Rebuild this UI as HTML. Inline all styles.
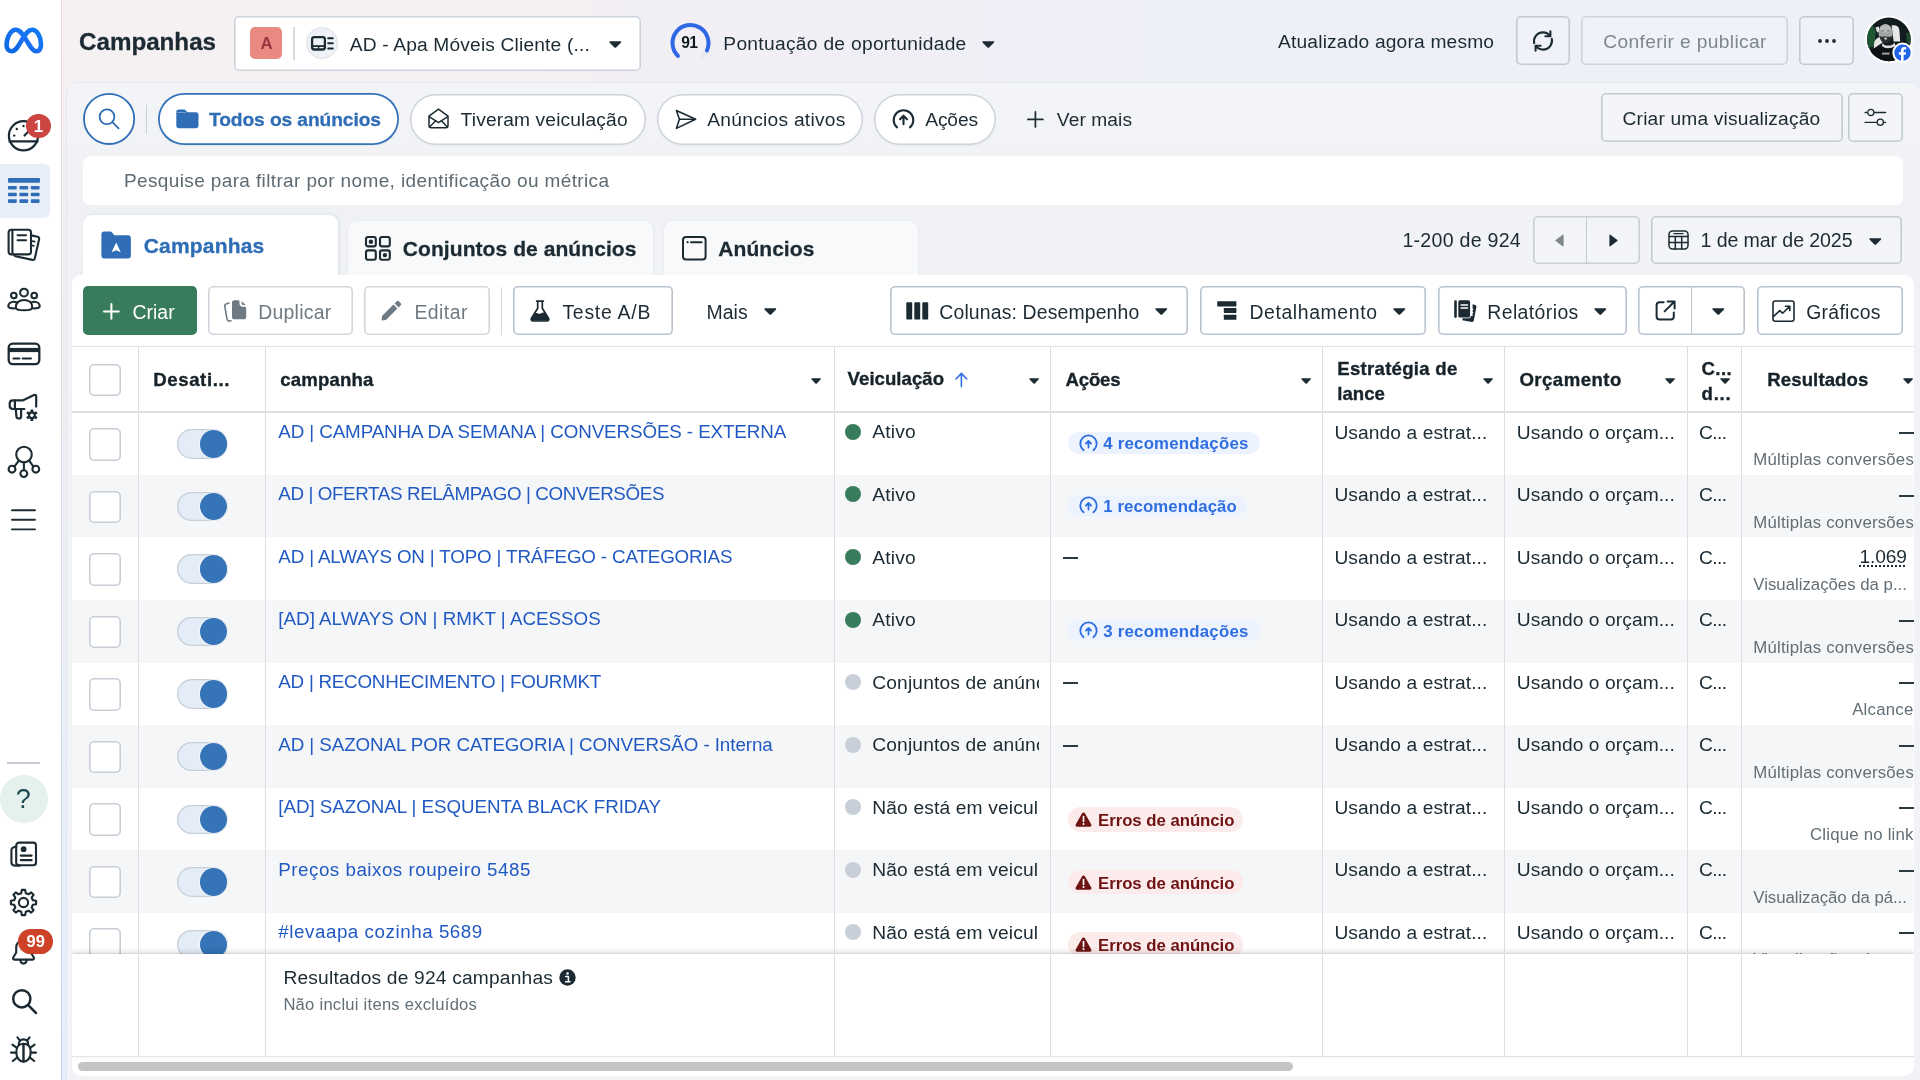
<!DOCTYPE html>
<html lang="pt-BR">
<head>
<meta charset="utf-8">
<title>Gerenciador de Anúncios - Campanhas</title>
<style>
*{box-sizing:border-box;margin:0;padding:0}
html,body{width:1920px;height:1080px;overflow:hidden}
body{font-family:"Liberation Sans",Arial,sans-serif;color:#1c2b33;position:relative;
 background:linear-gradient(90deg,#f6f1f2 0%,#f4f0f3 25%,#f0eff6 48%,#eef0f8 65%,#edf0f8 100%);}
#app{position:absolute;left:0;top:0;width:1920px;height:1080px;overflow:hidden;will-change:transform}
.abs{position:absolute}
.t{position:absolute;white-space:pre;line-height:1}
.hb{-webkit-text-stroke:.35px #17232a;color:#17232a}
.sb{-webkit-text-stroke:.3px}
svg{position:absolute;overflow:visible}
#leftstrip{position:absolute;left:61px;top:0;width:7px;height:1080px;background:linear-gradient(180deg,#f6f0f1 0%,#f1eef3 35%,#eeeff6 52%,#e6eefa 80%,#e3eefb 100%)}
#sidebar{position:absolute;left:0;top:0;width:61.2px;height:1080px;background:#fff}
#sbline{position:absolute;left:61.2px;top:0;width:1.3px;height:1080px;background:linear-gradient(180deg,#e6d9dc 0%,#dedbe2 40%,#d9dde6 55%,#c9d6e8 100%)}
#panel{position:absolute;left:66.2px;top:81.6px;width:1854.5px;height:1010px;background:linear-gradient(180deg,#f3f4f8 0,#f2f3f7 60px,#eff1f5 125px,#f2f3f7 165px,#f0f2f6 195px,#f1f3f7 100%);border:1px solid #e4e8ee;border-radius:10px 10px 0 0}
.btn{position:absolute;--bc:#c5ced6;--bw:1.6px;box-shadow:inset 0 0 0 var(--bw) var(--bc);border-radius:5px;background:#fff}
.btn.dis{--bc:#d0d7dd}
.pill{position:absolute;top:93.5px;height:51px;border-radius:26px;--bc:#cdd3d9;--bw:1.5px;background:#fff;box-shadow:inset 0 0 0 var(--bw) var(--bc),0 1px 2px rgba(0,0,0,.05)}
.pill.on{--bc:#3573b9;--bw:1.8px;top:93px;height:51.8px}
.vline{position:absolute;width:1.35px;background:#dcdee1}
.hline{position:absolute;height:1.5px;background:#dcdfe3}
.rowbg{position:absolute;left:72px;width:1841px;height:62.5px;background:#f5f6f7}
.cb{position:absolute;left:88.5px;width:32.5px;height:32.5px;box-shadow:inset 0 0 0 1.6px #c7ced6;border-radius:5px;background:#fff}
.tg{position:absolute;left:176.5px;width:51px;height:29.5px;border-radius:15px;background:#e4ecf7;box-shadow:inset 0 0 0 1.3px #c7cfd8}
.tg i{position:absolute;right:0.6px;top:1px;width:27.5px;height:27.5px;border-radius:50%;background:#3674b8;box-shadow:0 0 0 1px rgba(255,255,255,.6)}
.dot{position:absolute;left:844.5px;width:16px;height:16px;border-radius:50%}
.dot.g{background:#387c5c}
.dot.x{background:#c9cfd8}
.chip{position:absolute;height:21.5px;border-radius:11px}
.chip.b{background:#edf3fe}
.chip.r{background:#fcebeb}
.caret{position:absolute;width:0;height:0;border-left:5.5px solid transparent;border-right:5.5px solid transparent;border-top:6.5px solid #1c2b33;border-radius:2px}
.clip{position:absolute;overflow:hidden}
</style>
</head>
<body>
<div id="app">
<div id="leftstrip"></div>
<div id="sbline"></div>
<div id="panel"></div>
<div id="sidebar">
<svg style="left:3.5px;top:27px" width="39.5" height="27" viewBox="0 0 39.5 27"><defs><linearGradient id="mg" x1="0" y1="1" x2="1" y2="0"><stop offset="0" stop-color="#0668e1"/><stop offset=".5" stop-color="#1b6ff0"/><stop offset="1" stop-color="#0a7cf5"/></linearGradient></defs>
<path d="M2.6 18.2 C2.6 10 7 2.7 11.6 2.7 C16.5 2.7 19.5 8.5 23 14.2 C26.3 19.6 28.6 24.2 32.2 24.2 C35.4 24.2 37 21.3 37 17.2 C37 9.6 33 2.7 28.2 2.7 C24.4 2.7 21.7 6.7 18.6 11.8 C14.8 18.1 12.2 24.2 7.7 24.2 C4.4 24.2 2.6 21.8 2.6 18.2 Z" fill="none" stroke="url(#mg)" stroke-width="4.6" stroke-linejoin="round"/></svg>
<svg style="left:7px;top:119px" width="34" height="34" viewBox="0 0 34 34" fill="none" stroke="#1c2b33" stroke-width="2.2" stroke-linecap="round"><circle cx="16.5" cy="16.8" r="14.6"/><path d="M2.5 22.4H30.5"/><path d="M17.5 16.5L23 11"/><circle cx="7.2" cy="16.6" r="1.2" fill="#1c2b33" stroke="none"/><circle cx="9.8" cy="10" r="1.2" fill="#1c2b33" stroke="none"/><circle cx="16.5" cy="7" r="1.2" fill="#1c2b33" stroke="none"/></svg>
<div class="abs" style="left:26px;top:113.8px;width:24.6px;height:24.6px;border-radius:50%;background:#cb4640"></div>
<div class="t" style="left:0.0px;top:118.0px;font-size:17px;font-weight:700;color:#fff;left:33.8px;">1</div>
<div class="abs" style="left:0;top:163.5px;width:50px;height:54px;background:#e7eef7;border-radius:0 6px 6px 0"></div>
<svg style="left:7.5px;top:177.8px" width="32" height="26" viewBox="0 0 32 26" fill="#2f6db6"><rect x="0" y="0" width="32" height="4.8" rx="1"/><rect x="0.0" y="8.0" width="8.8" height="3.6" rx=".8"/><rect x="11.4" y="8.0" width="8.8" height="3.6" rx=".8"/><rect x="22.8" y="8.0" width="8.8" height="3.6" rx=".8"/><rect x="0.0" y="14.7" width="8.8" height="3.6" rx=".8"/><rect x="11.4" y="14.7" width="8.8" height="3.6" rx=".8"/><rect x="22.8" y="14.7" width="8.8" height="3.6" rx=".8"/><rect x="0.0" y="21.3" width="8.8" height="3.6" rx=".8"/><rect x="11.4" y="21.3" width="8.8" height="3.6" rx=".8"/><rect x="22.8" y="21.3" width="8.8" height="3.6" rx=".8"/></svg>
<svg style="left:6.5px;top:227.5px" width="34" height="34" viewBox="0 0 34 34" fill="none" stroke="#1c2b33" stroke-width="2.1" stroke-linejoin="round" stroke-linecap="round"><rect x="1.6" y="1.8" width="22.4" height="24.6" rx="2.6"/><path d="M5.4 2V26.2"/><path d="M24.2 7.4L30.6 8.8C31.8 9.1 32.4 10 32.1 11.2L27.8 30.4C27.5 31.6 26.6 32.2 25.4 31.9L8.6 28.2C7.8 28 7.3 27.4 7.2 26.6"/><path d="M10.6 7.2H19M10.6 12.2H19"/><path d="M25.4 13.2L27.6 13.7M24.6 17.4L26.8 17.9" stroke-width="1.7"/></svg>
<svg style="left:6.5px;top:287px" width="34" height="25" viewBox="0 0 34 25" fill="none" stroke="#1c2b33" stroke-width="2.1" stroke-linejoin="round" stroke-linecap="round"><circle cx="17" cy="5.6" r="3.9"/><circle cx="6.8" cy="8.6" r="2.8"/><circle cx="27.2" cy="8.6" r="2.8"/><path d="M8.8 20.5C8.8 15.5 12.3 13 17 13S25.200000000000003 15.5 25.200000000000003 20.5C25.2 22.3 21.5 23.3 17 23.3S8.8 22.3 8.8 20.5Z"/><path d="M9.5 15.3C8.7 14.9 7.8 14.7 6.8 14.7C3.6 14.7 1.3 16.6 1.3 19.2C1.3 20.6 3.6 21.4 7.6 21.5"/><path d="M24.5 15.3C25.3 14.9 26.2 14.7 27.2 14.7C30.4 14.7 32.7 16.6 32.7 19.2C32.7 20.6 30.4 21.4 26.4 21.5"/></svg>
<svg style="left:6.5px;top:342px" width="34" height="24" viewBox="0 0 34 24" fill="none" stroke="#1c2b33" stroke-width="2.3"><rect x="1.7" y="1.7" width="30.6" height="20.4" rx="4"/><path d="M1.7 8H32.3" stroke-width="4.2"/><path d="M6.4 16.4H12.4M15.6 16.4H24" stroke-width="2" stroke-linecap="round"/></svg>
<svg style="left:8px;top:392px" width="33" height="30" viewBox="0 0 33 30" fill="none" stroke="#1c2b33" stroke-width="2.2" stroke-linejoin="round" stroke-linecap="round"><path d="M28.2 14.6V4.4C28.2 3 27.2 2.400000000000001 26 3L14.6 8.4H5C3 8.4 1.7 9.7 1.7 11.6V13.8C1.7 15.700000000000001 3 17 5 17H16.4"/><path d="M6.9 8.6V16.8"/><path d="M7.8 17.2L8.4 24.4C8.5 25.7 9.2 26.4 10.4 26.4H11.2C12.4 26.4 13.1 25.7 13.1 24.4V17.2"/><g stroke-width="2.7" stroke-linecap="butt"><path d="M23.9 17.4V29M18.9 20.3L28.9 26.1M18.9 26.1L28.9 20.3"/></g><circle cx="23.9" cy="23.2" r="3.9" fill="#1c2b33" stroke="none"/><circle cx="23.9" cy="23.2" r="1.7" fill="#fff" stroke="none"/></svg>
<svg style="left:6.5px;top:445px" width="34" height="34" viewBox="0 0 34 34" fill="none" stroke="#1c2b33" stroke-width="2.1" stroke-linecap="round"><circle cx="17" cy="9.6" r="7.8"/><circle cx="5" cy="24.2" r="3.4"/><circle cx="16.8" cy="28.6" r="3.4"/><circle cx="28.8" cy="24.2" r="3.4"/><path d="M16.9 17.5V25.1M11.8 15.6L7.4 21.6M22.2 15.6L26.4 21.6"/></svg>
<svg style="left:11px;top:508px" width="25" height="23" viewBox="0 0 25 23" fill="none" stroke="#1c2b33" stroke-width="1.9" stroke-linecap="round"><path d="M1 2.2H24M1 11.8H24M1 21.4H24"/></svg>
<div class="abs" style="left:7px;top:762.3px;width:32.5px;height:1.6px;background:#c3cad1"></div>
<div class="abs" style="left:-0.5px;top:775.4px;width:48px;height:48px;border-radius:50%;background:#e4f1ec"></div>
<div class="t" style="left:0.0px;top:786.4px;font-size:27px;color:#1d4a4f;left:15.8px;">?</div>
<svg style="left:9.5px;top:841px" width="29" height="27" viewBox="0 0 29 27" fill="none" stroke="#1c2b33" stroke-width="2.1" stroke-linejoin="round" stroke-linecap="round"><rect x="6.2" y="1.6" width="19.8" height="22.6" rx="2.8"/><path d="M6.4 5.6L3.2 6.6C2 7 1.4 7.900000000000001 1.4 9.200000000000001V21C1.4 23.2 2.8 24.6 4.800000000000001 24.6H10"/><circle cx="13.6" cy="8.2" r="2.9" fill="#1c2b33" stroke="none"/><path d="M10.8 14.6H21.6M10.8 19.2H21.6" stroke-width="2.2"/></svg>
<svg style="left:9px;top:888px" width="29" height="29" viewBox="0 0 29 29" fill="none" stroke="#1c2b33" stroke-width="2.1" stroke-linejoin="round"><path d="M12.26 5.17L12.81 1.91L16.19 1.91L16.74 5.17L19.52 6.31L22.20 4.40L24.60 6.80L22.69 9.48L23.83 12.26L27.09 12.81L27.09 16.19L23.83 16.74L22.69 19.52L24.60 22.20L22.20 24.60L19.52 22.69L16.74 23.83L16.19 27.09L12.81 27.09L12.26 23.83L9.48 22.69L6.80 24.60L4.40 22.20L6.31 19.52L5.17 16.74L1.91 16.19L1.91 12.81L5.17 12.26L6.31 9.48L4.40 6.80L6.80 4.40L9.48 6.31Z"/><circle cx="14.5" cy="14.5" r="4.6"/></svg>
<svg style="left:10.5px;top:938px" width="25" height="28" viewBox="0 0 25 28" fill="none" stroke="#1c2b33" stroke-width="2.1" stroke-linejoin="round" stroke-linecap="round"><path d="M12.5 2.2C7.8 2.2 5.2 5.6 5.2 10V14.4L2.2 19.6C1.7 20.6 2.2 21.6 3.4 21.6H21.6C22.8 21.6 23.3 20.6 22.8 19.6L19.8 14.4V10C19.8 5.6 17.2 2.2 12.5 2.2Z"/><path d="M9.3 22.2C9.6 24.4 10.8 25.6 12.5 25.6S15.4 24.4 15.7 22.2"/></svg>
<div class="abs" style="left:18.3px;top:929px;width:35px;height:24.6px;border-radius:12.3px;background:#cd4229"></div>
<div class="t" style="left:0.0px;top:933.3px;font-size:16.5px;font-weight:700;color:#fff;left:26.4px;letter-spacing:.3px;">99</div>
<svg style="left:10.5px;top:988px" width="27" height="27" viewBox="0 0 27 27" fill="none" stroke="#1c2b33" stroke-width="2.5" stroke-linecap="round"><circle cx="10.8" cy="10.8" r="8.6"/><path d="M17.2 17.2L25 25"/></svg>
<svg style="left:9px;top:1035px" width="29" height="29" viewBox="0 0 29 29" fill="none" stroke="#1c2b33" stroke-width="2.1" stroke-linecap="round" stroke-linejoin="round"><path d="M14.5 8.8C19 8.8 21.7 12 21.7 17.2C21.7 22.8 18.6 26.6 14.5 26.6S7.3 22.8 7.3 17.2C7.3 12 10 8.8 14.5 8.8Z"/><path d="M14.5 9V26.4" stroke-width="2.4"/><path d="M9.8 9.6C9.8 6.4 11.6 4.4 14.5 4.4S19.2 6.4 19.2 9.6"/><path d="M10.8 5.4L8.4 2.4M18.2 5.4L20.6 2.4"/><path d="M7.3 17.6H2M21.7 17.6H27M7.9 12.8L3.4 9.6M21.1 12.8L25.6 9.6M8.3 22.4L3.8 26M20.7 22.4L25.2 26"/></svg>
</div>
<div id="header">
<div class="t sb" style="left:79.0px;top:29.5px;font-size:24.2px;font-weight:700;letter-spacing:-0.01px;">Campanhas</div>
<div class="btn" style="left:234px;top:16.2px;width:407px;height:54.5px;--bc:#ccd4db"></div>
<div class="abs" style="left:249.8px;top:27.2px;width:32.3px;height:32.3px;border-radius:5px;background:#e88a82"></div>
<div class="t" style="left:260.4px;top:36.0px;font-size:16.8px;font-weight:700;color:#9c3440;">A</div>
<div class="vline" style="left:293.2px;top:27px;height:33px;background:#d6dbe0"></div>
<div class="abs" style="left:305.8px;top:27.2px;width:32px;height:32px;border-radius:50%;background:#eef1f6;border:1.3px solid #dde1e6"></div>
<svg style="left:311px;top:36px" width="23" height="15" viewBox="0 0 23 15" fill="none" stroke="#1c2b33"><rect x="1.1" y="1.1" width="12.8" height="12.4" rx="2.2" stroke-width="2.3"/><path d="M1.5 10.1H13.5" stroke-width="1.8"/><path d="M7.6 10.5V13.2" stroke-width="1.4"/><path d="M17.2 2.2H21.8M17.2 7.3H21.8M17.2 12.4H21.8" stroke-width="2" stroke-linecap="round"/></svg>
<div class="t" style="left:349.8px;top:34.6px;font-size:19.2px;letter-spacing:0.16px;">AD - Apa Móveis Cliente (...</div>
<svg style="left:608.5px;top:40.5px" width="12.6" height="7.2" viewBox="0 0 12 7" preserveAspectRatio="none"><path d="M1.3 0.3H10.7C11.7 0.3 12 1 11.3 1.7L6.8 6.3C6.3 6.8 5.7 6.8 5.2 6.3L0.7 1.7C0 1 0.3 0.3 1.3 0.3Z" fill="#1c2b33"/></svg>
<svg style="left:669px;top:21px" width="43" height="43" viewBox="0 0 43 43" fill="none" stroke-width="4"><path d="M37.2 31.6 A18 18 0 0 1 34.34 34.62" stroke="#e3e7ee" stroke-linecap="round"/><path d="M9 34.95 A18 18 0 1 1 37.94 29.32" stroke="#2f68e4" stroke-linecap="round"/></svg>
<div class="t" style="left:681.2px;top:35.3px;font-size:15.6px;font-weight:700;color:#111a20;letter-spacing:-0.56px;">91</div>
<div class="t" style="left:723.3px;top:34.2px;font-size:19.2px;letter-spacing:0.30px;">Pontuação de oportunidade</div>
<svg style="left:982.0px;top:40.5px" width="12.6" height="7.2" viewBox="0 0 12 7" preserveAspectRatio="none"><path d="M1.3 0.3H10.7C11.7 0.3 12 1 11.3 1.7L6.8 6.3C6.3 6.8 5.7 6.8 5.2 6.3L0.7 1.7C0 1 0.3 0.3 1.3 0.3Z" fill="#1c2b33"/></svg>
<div class="t" style="left:1278.0px;top:32.2px;font-size:19.2px;letter-spacing:0.18px;">Atualizado agora mesmo</div>
<div class="btn" style="left:1515.6px;top:16.4px;width:54.4px;height:48.3px;background:rgba(255,255,255,.18);--bc:#c2cad2;--bw:1.6px"></div>
<svg style="left:1531px;top:29px" width="24" height="24" viewBox="0 0 24 24" fill="none" stroke="#1c2b33" stroke-width="2.1" stroke-linecap="round" stroke-linejoin="round"><path d="M3.2 14.2C2.2 9 5.6 3.4 12 3.4C15 3.4 17.4 4.6 19 6.8"/><path d="M14.4 7.2H19.4V2.2"/><path d="M20.8 9.8C21.8 15 18.4 20.6 12 20.6C9 20.6 6.6 19.4 5 17.2"/><path d="M9.6 16.8H4.6V21.8"/></svg>
<div class="btn" style="left:1581px;top:16.4px;width:207px;height:48.3px;background:rgba(255,255,255,.18);--bc:#cdd4da;--bw:1.6px"></div>
<div class="t" style="left:1603.3px;top:32.4px;font-size:19.2px;color:#7d878e;letter-spacing:0.35px;">Conferir e publicar</div>
<div class="btn" style="left:1799.2px;top:16.4px;width:54.4px;height:48.3px;background:rgba(255,255,255,.18);--bc:#c2cad2;--bw:1.6px"></div>
<svg style="left:1817px;top:38px" width="20" height="6" viewBox="0 0 20 6" fill="#1c2b33"><circle cx="3" cy="3" r="1.9"/><circle cx="10" cy="3" r="1.9"/><circle cx="17" cy="3" r="1.9"/></svg>
<svg style="left:1864px;top:15px" width="52" height="52" viewBox="0 0 52 52"><defs><clipPath id="avc"><circle cx="24.9" cy="24.4" r="21.8"/></clipPath></defs><circle cx="24.9" cy="24.4" r="24" fill="#fff"/><g clip-path="url(#avc)"><rect width="52" height="52" fill="#121c1f"/><path d="M2 14L9 10L12 17L10 31L3 34Z" fill="#1e5533"/><path d="M42 18L48 17V30L43 28Z" fill="#1d4a2f"/><path d="M27.6 10.6C32 9.6 35 11.4 35.4 15L36.2 26.4H29.6Z" fill="#e6e7e6"/><path d="M11.4 12.6L15 11.4L15.4 16.6L13.2 17.6Z" fill="#dfe3df"/><path d="M9.8 33.6L10.2 27C11.6 24 13.8 22.4 16 22L18.6 27.6Z" fill="#e4e6e4"/><ellipse cx="21.6" cy="18.2" rx="7.1" ry="9.2" fill="#a4a6a6"/><ellipse cx="21.2" cy="13.6" rx="5.6" ry="4" fill="#b9baba"/><path d="M15.4 20.4C16 25.4 18.6 28 21.8 28C25 28 27.6 25.4 28.4 20.6C26.6 22.6 24.4 21.6 21.8 21.6C19.2 21.6 17.2 22.4 15.4 20.4Z" fill="#2b2e2f"/><ellipse cx="21.6" cy="23.6" rx="1.6" ry="1.1" fill="#c9c9c9"/><path d="M17.2 15.8H20M23 15.8H25.8" stroke="#6d7070" stroke-width="1"/><path d="M18.6 28C19.6 31.4 28.6 31.6 30.6 27.4L31.6 31.6C28 34.6 20.6 34.4 17.8 31.6Z" fill="#dcdddc"/><path d="M6 52V38C9 33 14 31.4 18 31C21 34 28 34.2 31.6 30.6C36 31 41 33 44 38V52Z" fill="#0d1315"/><rect x="18" y="37.6" width="7.6" height="2" fill="#cfd2d2" opacity=".75"/></g><circle cx="38.5" cy="37.7" r="10.2" fill="#fff"/><circle cx="38.5" cy="37.7" r="8.2" fill="#2264e8"/><path d="M39.6 46V39.7H41.7L42.1 37.2H39.6V35.7C39.6 34.9 39.9 34.4 41 34.4H42.2V32.2C41.8 32.1 41 32 40.2 32C38.2 32 37 33.2 37 35.4V37.2H34.9V39.7H37V46Z" fill="#fff"/></svg>
</div>
<div id="filters">
<svg style="left:82px;top:92px" width="54" height="54" viewBox="0 0 54 54"><circle cx="27.1" cy="26.9" r="25.1" fill="#fff" stroke="#2f6db6" stroke-width="1.8"/></svg>
<svg style="left:98px;top:108px" width="22" height="22" viewBox="0 0 22 22" fill="none" stroke="#2f6db6" stroke-width="1.8" stroke-linecap="round"><circle cx="9" cy="8.8" r="7.4"/><path d="M14.4 14.2L20.6 20.4"/></svg>
<div class="vline" style="left:145.6px;top:104.5px;height:29px;background:#c9d0d8;width:1.4px"></div>
<div class="pill on" style="left:158px;width:240.5px"></div>
<svg style="left:175.5px;top:108.5px" width="23" height="20" viewBox="0 0 23 20" fill="#2f6db6"><path d="M0.3 3.2C0.3 1.6 1.2 0.6 2.8 0.6H7.6C8.6 0.6 9.2 0.9 9.8 1.6L11.3 3.3H20C21.6 3.3 22.5 4.3 22.5 5.8V16.6C22.5 18.2 21.5 19.2 20 19.2H2.8C1.2 19.2 0.3 18.2 0.3 16.6Z"/><path d="M1.2 3.6H10" stroke="#fff" stroke-width=".7" opacity=".55"/></svg>
<div class="t sb" style="left:209.0px;top:109.9px;font-size:19.2px;font-weight:700;color:#2f6db6;letter-spacing:-0.09px;">Todos os anúncios</div>
<div class="pill" style="left:410px;width:235.5px"></div>
<svg style="left:428px;top:108px" width="21" height="21" viewBox="0 0 21 21" fill="none" stroke="#1c2b33" stroke-width="1.5" stroke-linejoin="round" stroke-linecap="round"><path d="M1 8.2L10.5 1.2L20 8.2V17.6C20 19 19.2 19.8 17.8 19.8H3.2C1.8 19.8 1 19 1 17.6Z"/><path d="M1.2 8.6L10.5 14.6L19.8 8.6"/><path d="M1.6 19L7.6 12.8M19.4 19L13.4 12.8"/></svg>
<div class="t" style="left:460.6px;top:109.9px;font-size:19.2px;letter-spacing:0.14px;">Tiveram veiculação</div>
<div class="pill" style="left:657px;width:205.5px"></div>
<svg style="left:674.5px;top:109px" width="22" height="21" viewBox="0 0 22 21" fill="none" stroke="#1c2b33" stroke-width="1.6" stroke-linejoin="round" stroke-linecap="round"><path d="M1.4 1.4L20.6 10.3L1.4 19.4L4.4 10.3Z"/><path d="M4.6 10.3H20"/></svg>
<div class="t" style="left:707.3px;top:109.9px;font-size:19.2px;letter-spacing:0.26px;">Anúncios ativos</div>
<div class="pill" style="left:874.2px;width:122.3px"></div>
<svg style="left:892px;top:108px" width="23" height="22" viewBox="0 0 23 22" fill="none" stroke="#1c2b33" stroke-width="2.1" stroke-linecap="round" stroke-linejoin="round"><path d="M5 19.4A9.8 9.8 0 1 1 18 19.4"/><path d="M11.5 16.2V8.2M8 11.2L11.5 7.7L15 11.2"/></svg>
<div class="t" style="left:925.3px;top:110.1px;font-size:19.2px;letter-spacing:-0.16px;">Ações</div>
<svg style="left:1026.5px;top:111px" width="17" height="17" viewBox="0 0 17 17" fill="none" stroke="#1c2b33" stroke-width="1.7" stroke-linecap="round"><path d="M8.4 0.9V15.9M0.9 8.4H15.9"/></svg>
<div class="t" style="left:1056.8px;top:110.2px;font-size:19.2px;letter-spacing:0.09px;">Ver mais</div>
<div class="btn" style="left:1601px;top:93.2px;width:241.8px;height:48.4px;background:rgba(255,255,255,.15);--bc:#c2cad2;--bw:1.6px"></div>
<div class="t" style="left:1622.6px;top:108.9px;font-size:19.2px;letter-spacing:0.17px;">Criar uma visualização</div>
<div class="btn" style="left:1848.3px;top:93.2px;width:54.3px;height:48.4px;background:rgba(255,255,255,.15);--bc:#c2cad2;--bw:1.6px"></div>
<svg style="left:1864px;top:107px" width="23" height="21" viewBox="0 0 23 21" fill="none" stroke="#1c2b33" stroke-width="1.3" stroke-linecap="round"><path d="M1 5.5H3M10.4 5.5H21.6"/><circle cx="6.8" cy="5.5" r="3.1"/><path d="M1 15.3H12.6M20 15.3H21.6"/><circle cx="16.3" cy="15.3" r="3.1"/></svg>
<div class="abs" style="left:83px;top:155.5px;width:1819.5px;height:49px;background:#fff;border-radius:7px"></div>
<div class="t" style="left:124.0px;top:171.0px;font-size:19px;color:#5e6a72;letter-spacing:0.37px;">Pesquise para filtrar por nome, identificação ou métrica</div>
</div>
<div id="tabs">
<div class="abs" style="left:348.3px;top:221px;width:304.5px;height:60px;background:#f8f9fa;border-radius:9px 9px 0 0;box-shadow:0 0 3px rgba(120,140,170,.12)"></div>
<div class="abs" style="left:664px;top:221px;width:253.8px;height:60px;background:#f8f9fa;border-radius:9px 9px 0 0;box-shadow:0 0 3px rgba(120,140,170,.12)"></div>
<div class="abs" style="left:83px;top:215px;width:254.6px;height:66px;background:#fff;border-radius:9px 9px 0 0;box-shadow:1px 0 4px rgba(120,140,170,.18)"></div>
<div class="abs" id="card" style="left:72px;top:275.3px;width:1841.6px;height:801px;background:#fff;border-radius:9px 10px 10px 9px"></div>
<svg style="left:100.5px;top:230.8px" width="31" height="28" viewBox="0 0 31 28"><path d="M0.4 3.4C0.4 1.6 1.4 0.5 3.2 0.5H8.6C9.8 0.5 10.6 0.9 11.3 1.7L13.4 4.2H27C28.8 4.2 29.9 5.3 29.9 7.1V24.6C29.9 26.4 28.8 27.5 27 27.5H3.2C1.4 27.5 0.4 26.4 0.4 24.6Z" fill="#2f6db6"/><path d="M15.2 11.6L19.8 21.2L15.2 19.3L10.6 21.2Z" fill="#fff"/></svg>
<div class="t sb" style="left:143.7px;top:235.2px;font-size:21px;font-weight:700;color:#2f6db6;letter-spacing:0.19px;">Campanhas</div>
<svg style="left:365.3px;top:236px" width="26" height="25" viewBox="0 0 26 25" fill="none" stroke="#1c2b33" stroke-width="2.1"><rect x="1" y="1" width="9.8" height="9.4" rx="2"/><rect x="15" y="1" width="9.8" height="9.4" rx="2"/><rect x="1" y="14.4" width="9.8" height="9.4" rx="2"/><rect x="15" y="14.4" width="9.8" height="9.4" rx="2"/><circle cx="5.9" cy="5.7" r="2.2" fill="#1c2b33" stroke="none"/><circle cx="19.9" cy="19.1" r="2.2" fill="#1c2b33" stroke="none"/></svg>
<div class="t sb" style="left:402.8px;top:238.2px;font-size:21px;font-weight:700;letter-spacing:0.07px;">Conjuntos de anúncios</div>
<svg style="left:681.5px;top:236px" width="25" height="25" viewBox="0 0 25 25" fill="none" stroke="#1c2b33" stroke-width="2" stroke-linecap="round"><rect x="1" y="1" width="22.6" height="22.6" rx="3"/><path d="M9 6.2H19.6"/><circle cx="5.6" cy="6.2" r="1.1" fill="#1c2b33" stroke="none"/></svg>
<div class="t sb" style="left:718.3px;top:238.2px;font-size:21px;font-weight:700;letter-spacing:0.05px;">Anúncios</div>
<div class="t" style="left:1402.4px;top:230.9px;font-size:19.6px;letter-spacing:0.26px;">1-200 de 924</div>
<div class="btn" style="left:1533.3px;top:216.2px;width:106.6px;height:47.5px;background:rgba(255,255,255,.2);--bc:#c8cfd6;--bw:1.6px"></div>
<div class="vline" style="left:1585.6px;top:216.5px;height:47px;background:#c3cbd3"></div>
<svg style="left:1555px;top:233.5px" width="9" height="13" viewBox="0 0 9 13"><path d="M8 1.2V11.8L1 6.5Z" fill="#7d878e" stroke="#7d878e" stroke-width="1.2" stroke-linejoin="round"/></svg>
<svg style="left:1608.5px;top:233.5px" width="9" height="13" viewBox="0 0 9 13"><path d="M1 1.2V11.8L8 6.5Z" fill="#1c2b33" stroke="#1c2b33" stroke-width="1.2" stroke-linejoin="round"/></svg>
<div class="btn" style="left:1651.3px;top:216.2px;width:251.2px;height:47.5px;background:rgba(255,255,255,.2);--bc:#c2cad2;--bw:1.6px"></div>
<svg style="left:1668px;top:230px" width="21" height="20" viewBox="0 0 21 20" fill="none" stroke="#1c2b33" stroke-width="1.5" stroke-linecap="round"><rect x="1" y="1" width="19" height="18" rx="3.4"/><path d="M1 6.4H20M1 12.6H20M7.3 6.4V19M13.7 6.4V19"/><path d="M6 3.6H15" stroke-width="1.3"/></svg>
<div class="t" style="left:1700.6px;top:231.4px;font-size:19.6px;letter-spacing:-0.11px;">1 de mar de 2025</div>
<svg style="left:1869.3px;top:237.5px" width="12.6" height="7.2" viewBox="0 0 12 7" preserveAspectRatio="none"><path d="M1.3 0.3H10.7C11.7 0.3 12 1 11.3 1.7L6.8 6.3C6.3 6.8 5.7 6.8 5.2 6.3L0.7 1.7C0 1 0.3 0.3 1.3 0.3Z" fill="#1c2b33"/></svg>
</div>
<div id="toolbar">
<div class="abs" style="left:83.2px;top:286px;width:113.6px;height:49px;background:#387c5c;border-radius:5px"></div>
<svg style="left:102.5px;top:303px" width="17" height="17" viewBox="0 0 17 17" fill="none" stroke="#fff" stroke-width="2" stroke-linecap="round"><path d="M8.4 1V15.8M1 8.4H15.8"/></svg>
<div class="t" style="left:132.6px;top:302.8px;font-size:19.4px;color:#fff;">Criar</div>
<div class="btn dis" style="left:207.8px;top:286.2px;width:145.2px;height:48.6px"></div>
<svg style="left:223.5px;top:299.5px" width="24" height="22" viewBox="0 0 24 22"><path d="M8 2.6C8 1.2 8.9 0.3 10.3 0.3H14.3C15.1 0.3 15.5 0.7 15.5 1.5V3.6C15.5 5.6 16.7 6.8 18.7 6.8H20.6C21.6 6.8 22.2 7.4 22.2 8.4V16.9C22.2 18.3 21.3 19.2 19.9 19.2H10.3C8.9 19.2 8 18.3 8 16.9Z" fill="#6f7a82"/><path d="M17.7 0.9L21.6 4.9H18.9C18.2 4.9 17.7 4.4 17.7 3.7Z" fill="#6f7a82"/><path d="M4.9 3.1L2.6 3.7C1.3 4 0.6 5 0.8 6.3L3 18.8C3.3 20.3 4.3 21.1 5.7 21L7 20.8" fill="none" stroke="#6f7a82" stroke-width="1.6" stroke-linecap="round"/></svg>
<div class="t" style="left:258.2px;top:302.8px;font-size:19.4px;color:#6f7a82;letter-spacing:0.27px;">Duplicar</div>
<div class="btn dis" style="left:364.2px;top:286.2px;width:125.4px;height:48.6px"></div>
<svg style="left:381px;top:300px" width="21" height="21" viewBox="0 0 21 21" fill="#6f7a82"><path d="M1 16L12.4 4.6L16.4 8.6L5 20L0.6 20.4Z"/><path d="M13.6 3.4L15.8 1.2C16.4 0.6 17.2 0.6 17.8 1.2L19.8 3.2C20.400000000000002 3.8 20.400000000000002 4.6 19.8 5.2L17.6 7.4Z"/></svg>
<div class="t" style="left:414.4px;top:302.8px;font-size:19.4px;color:#6f7a82;letter-spacing:0.47px;">Editar</div>
<div class="vline" style="left:500.6px;top:286.5px;height:48px;background:#d3d9df"></div>
<div class="btn" style="left:513.2px;top:286.2px;width:160px;height:48.6px;--bc:#b9c3ce;--bw:1.6px"></div>
<svg style="left:530px;top:299.5px" width="20" height="22" viewBox="0 0 20 22"><path d="M6.6 1.1H13.4M7.7 1.3V8.2L1.5 18.2C0.7 19.6 1.5 21 3.1 21H16.9C18.5 21 19.3 19.6 18.5 18.2L12.3 8.2V1.3" fill="none" stroke="#1c2b33" stroke-width="1.7" stroke-linecap="round" stroke-linejoin="round"/><path d="M4.6 13.6C7 12 8.6 14.6 10.6 13.6C12.4 12.7 13.6 11.8 15 13L18.2 18.2C18.9 19.6 18.3 20.8 16.9 20.8H3.1C1.7 20.8 1.1 19.6 1.8 18.2Z" fill="#1c2b33"/></svg>
<div class="t" style="left:562.4px;top:302.8px;font-size:19.4px;letter-spacing:0.76px;">Teste A/B</div>
<div class="t" style="left:706.6px;top:302.8px;font-size:19.4px;letter-spacing:0.02px;">Mais</div>
<svg style="left:763.8px;top:308.0px" width="12.6" height="7.2" viewBox="0 0 12 7" preserveAspectRatio="none"><path d="M1.3 0.3H10.7C11.7 0.3 12 1 11.3 1.7L6.8 6.3C6.3 6.8 5.7 6.8 5.2 6.3L0.7 1.7C0 1 0.3 0.3 1.3 0.3Z" fill="#1c2b33"/></svg>
<div class="btn" style="left:890px;top:286.2px;width:298.4px;height:48.6px;--bc:#b9c3ce;--bw:1.6px"></div>
<svg style="left:905.5px;top:302px" width="23" height="18" viewBox="0 0 23 18" fill="#1c2b33"><rect x="0.3" y="0.2" width="5.9" height="17.4" rx=".8"/><rect x="8.3" y="0.2" width="5.9" height="17.4" rx=".8"/><rect x="16.3" y="0.2" width="5.9" height="17.4" rx=".8"/></svg>
<div class="t" style="left:939.3px;top:302.8px;font-size:19.4px;letter-spacing:0.15px;">Colunas: Desempenho</div>
<svg style="left:1155.3px;top:308.0px" width="12.6" height="7.2" viewBox="0 0 12 7" preserveAspectRatio="none"><path d="M1.3 0.3H10.7C11.7 0.3 12 1 11.3 1.7L6.8 6.3C6.3 6.8 5.7 6.8 5.2 6.3L0.7 1.7C0 1 0.3 0.3 1.3 0.3Z" fill="#1c2b33"/></svg>
<div class="btn" style="left:1200px;top:286.2px;width:226px;height:48.6px;--bc:#b9c3ce;--bw:1.6px"></div>
<svg style="left:1217px;top:301px" width="20" height="19" viewBox="0 0 20 19" fill="#1c2b33"><rect x="0.2" y="0.2" width="19.2" height="5.4" rx=".6"/><rect x="6.8" y="7" width="12.6" height="4.9" rx=".6"/><rect x="6.8" y="13.7" width="12.6" height="5.1" rx=".6"/></svg>
<div class="t" style="left:1249.4px;top:302.8px;font-size:19.4px;letter-spacing:0.62px;">Detalhamento</div>
<svg style="left:1393.3px;top:308.0px" width="12.6" height="7.2" viewBox="0 0 12 7" preserveAspectRatio="none"><path d="M1.3 0.3H10.7C11.7 0.3 12 1 11.3 1.7L6.8 6.3C6.3 6.8 5.7 6.8 5.2 6.3L0.7 1.7C0 1 0.3 0.3 1.3 0.3Z" fill="#1c2b33"/></svg>
<div class="btn" style="left:1437.8px;top:286.2px;width:189px;height:48.6px;--bc:#b9c3ce;--bw:1.6px"></div>
<svg style="left:1453.5px;top:299.5px" width="24" height="23" viewBox="0 0 24 23"><path d="M18.6 4.2L21.2 5C22.2 5.3 22.6 6 22.4 7L19.8 20.6C19.6 21.6 18.9 22.1 17.9 21.9L8.4 20.2V16H18.6Z" fill="#1c2b33"/><path d="M17.2 9.2L19.2 9.7M17.2 12.2L19.2 12.7" stroke="#fff" stroke-width="1.2"/><rect x="3.6" y="-0.4" width="13.3" height="18.6" rx="2.2" fill="#fff"/><rect x="4.3" y="0.3" width="11.8" height="17.2" rx="1.6" fill="#1c2b33"/><path d="M1.5 1.5V16.6" stroke="#1c2b33" stroke-width="2.6" stroke-linecap="round" fill="none"/><path d="M7 5H13.6M7 8H13.6" stroke="#fff" stroke-width="1.3" stroke-linecap="round"/></svg>
<div class="t" style="left:1487.3px;top:302.8px;font-size:19.4px;letter-spacing:0.41px;">Relatórios</div>
<svg style="left:1593.8px;top:308.0px" width="12.6" height="7.2" viewBox="0 0 12 7" preserveAspectRatio="none"><path d="M1.3 0.3H10.7C11.7 0.3 12 1 11.3 1.7L6.8 6.3C6.3 6.8 5.7 6.8 5.2 6.3L0.7 1.7C0 1 0.3 0.3 1.3 0.3Z" fill="#1c2b33"/></svg>
<div class="btn" style="left:1638.3px;top:286.2px;width:107.2px;height:48.6px;--bc:#b9c3ce;--bw:1.6px"></div>
<div class="vline" style="left:1690.7px;top:286.5px;height:48px;background:#b9c4d0"></div>
<svg style="left:1655px;top:300px" width="21" height="21" viewBox="0 0 21 21" fill="none" stroke="#1c2b33" stroke-width="2" stroke-linecap="round" stroke-linejoin="round"><path d="M8.6 2.2H4.6C2.8 2.2 1.6 3.4000000000000004 1.6 5.2V16.4C1.6 18.2 2.8 19.4 4.6 19.4H15.8C17.6 19.4 18.8 18.2 18.8 16.4V12.4"/><path d="M9.6 11.4L19.2 1.8M12.6 1.4H19.6V8.4"/></svg>
<svg style="left:1712.0px;top:308.0px" width="12.6" height="7.2" viewBox="0 0 12 7" preserveAspectRatio="none"><path d="M1.3 0.3H10.7C11.7 0.3 12 1 11.3 1.7L6.8 6.3C6.3 6.8 5.7 6.8 5.2 6.3L0.7 1.7C0 1 0.3 0.3 1.3 0.3Z" fill="#1c2b33"/></svg>
<div class="btn" style="left:1756.7px;top:286.2px;width:146px;height:48.6px;--bc:#b9c3ce;--bw:1.6px"></div>
<svg style="left:1772px;top:299.5px" width="23" height="22" viewBox="0 0 23 22" fill="none" stroke="#1c2b33" stroke-width="1.6" stroke-linecap="round" stroke-linejoin="round"><rect x="1" y="1" width="21" height="20.2" rx="2.2"/><path d="M1.6 16.4L7.8 10.6L10.6 13.2L17.4 6.6M13.4 6.2H17.8V10.6"/></svg>
<div class="t" style="left:1806.2px;top:302.8px;font-size:19.4px;letter-spacing:0.30px;">Gráficos</div>
</div>
<div id="table">
<div class="clip" style="left:72px;top:346px;width:1841.6px;height:720px">
<div class="rowbg" style="left:0;top:128.9px;height:62.55px"></div>
<div class="rowbg" style="left:0;top:254.0px;height:62.55px"></div>
<div class="rowbg" style="left:0;top:379.1px;height:62.55px"></div>
<div class="rowbg" style="left:0;top:504.2px;height:62.55px"></div>
<div class="cb" style="left:16.6px;top:82.0px"></div>
<div class="tg" style="left:104.6px;top:83.2px"><i></i></div>
<div class="t" style="left:206.3px;top:76.7px;font-size:18.8px;color:#2159c3;letter-spacing:-0.10px;">AD | CAMPANHA DA SEMANA | CONVERSÕES - EXTERNA</div>
<div class="dot g" style="left:772.8px;top:77.9px"></div>
<div class="clip" style="left:794.0px;top:69.6px;width:173.2px;height:40px"><div class="t" style="left:6.3px;top:6.9px;font-size:19.2px;letter-spacing:0.18px;">Ativo</div></div>
<div class="chip b" style="left:995.6px;top:86.2px;width:192.5px"></div>
<svg style="left:1006.6px;top:87.8px" width="19" height="19" viewBox="0 0 19 19" fill="none" stroke="#2f6ee0" stroke-width="1.8" stroke-linecap="round" stroke-linejoin="round"><path d="M4.6 16.2A8.2 8.2 0 1 1 14.4 16.2"/><path d="M9.5 13.6V7.2M6.9 9.6L9.5 7L12.1 9.6"/></svg>
<div class="t" style="left:1031.3px;top:90.2px;font-size:16.8px;font-weight:700;color:#2f6ee0;letter-spacing:0.23px;">4 recomendações</div>
<div class="t" style="left:1262.4px;top:76.5px;font-size:19.2px;letter-spacing:0.09px;">Usando a estrat...</div>
<div class="t" style="left:1444.8px;top:76.5px;font-size:19.2px;letter-spacing:0.08px;">Usando o orçam...</div>
<div class="t" style="left:1627.0px;top:76.5px;font-size:19.2px;letter-spacing:-0.62px;">C...</div>
<div class="abs" style="left:1826.6px;top:86px;width:16px;height:2px;background:#2b3941"></div>
<div class="t" style="left:1681.3px;top:106.0px;font-size:16.8px;color:#626e76;letter-spacing:0.20px;">Múltiplas conversões</div>
<div class="cb" style="left:16.6px;top:144.6px"></div>
<div class="tg" style="left:104.6px;top:145.8px"><i></i></div>
<div class="t" style="left:206.3px;top:139.3px;font-size:18.8px;color:#2159c3;letter-spacing:-0.38px;">AD | OFERTAS RELÂMPAGO | CONVERSÕES</div>
<div class="dot g" style="left:772.8px;top:140.4px"></div>
<div class="clip" style="left:794.0px;top:132.1px;width:173.2px;height:40px"><div class="t" style="left:6.3px;top:6.9px;font-size:19.2px;letter-spacing:0.18px;">Ativo</div></div>
<div class="chip b" style="left:995.6px;top:148.8px;width:179px"></div>
<svg style="left:1006.6px;top:150.3px" width="19" height="19" viewBox="0 0 19 19" fill="none" stroke="#2f6ee0" stroke-width="1.8" stroke-linecap="round" stroke-linejoin="round"><path d="M4.6 16.2A8.2 8.2 0 1 1 14.4 16.2"/><path d="M9.5 13.6V7.2M6.9 9.6L9.5 7L12.1 9.6"/></svg>
<div class="t" style="left:1031.3px;top:152.7px;font-size:16.8px;font-weight:700;color:#2f6ee0;letter-spacing:0.08px;">1 recomendação</div>
<div class="t" style="left:1262.4px;top:139.1px;font-size:19.2px;letter-spacing:0.09px;">Usando a estrat...</div>
<div class="t" style="left:1444.8px;top:139.1px;font-size:19.2px;letter-spacing:0.08px;">Usando o orçam...</div>
<div class="t" style="left:1627.0px;top:139.1px;font-size:19.2px;letter-spacing:-0.62px;">C...</div>
<div class="abs" style="left:1826.6px;top:149px;width:16px;height:2px;background:#2b3941"></div>
<div class="t" style="left:1681.3px;top:168.5px;font-size:16.8px;color:#626e76;letter-spacing:0.20px;">Múltiplas conversões</div>
<div class="cb" style="left:16.6px;top:207.1px"></div>
<div class="tg" style="left:104.6px;top:208.3px"><i></i></div>
<div class="t" style="left:206.3px;top:201.8px;font-size:18.8px;color:#2159c3;letter-spacing:-0.15px;">AD | ALWAYS ON | TOPO | TRÁFEGO - CATEGORIAS</div>
<div class="dot g" style="left:772.8px;top:203.0px"></div>
<div class="clip" style="left:794.0px;top:194.7px;width:173.2px;height:40px"><div class="t" style="left:6.3px;top:6.9px;font-size:19.2px;letter-spacing:0.18px;">Ativo</div></div>
<div class="abs" style="left:991.2px;top:211px;width:14.8px;height:2px;background:#2b3941"></div>
<div class="t" style="left:1262.4px;top:201.6px;font-size:19.2px;letter-spacing:0.09px;">Usando a estrat...</div>
<div class="t" style="left:1444.8px;top:201.6px;font-size:19.2px;letter-spacing:0.08px;">Usando o orçam...</div>
<div class="t" style="left:1627.0px;top:201.6px;font-size:19.2px;letter-spacing:-0.62px;">C...</div>
<div class="t" style="left:1787.5px;top:201.2px;font-size:19.2px;letter-spacing:-0.13px;text-decoration:underline dotted #1c2b33;text-decoration-thickness:2px;text-underline-offset:2.2px;">1.069</div>
<div class="t" style="left:1681.3px;top:231.1px;font-size:16.8px;color:#626e76;">Visualizações da p...</div>
<div class="cb" style="left:16.6px;top:269.6px"></div>
<div class="tg" style="left:104.6px;top:270.8px"><i></i></div>
<div class="t" style="left:206.3px;top:264.4px;font-size:18.8px;color:#2159c3;letter-spacing:0.01px;">[AD] ALWAYS ON | RMKT | ACESSOS</div>
<div class="dot g" style="left:772.8px;top:265.5px"></div>
<div class="clip" style="left:794.0px;top:257.2px;width:173.2px;height:40px"><div class="t" style="left:6.3px;top:6.9px;font-size:19.2px;letter-spacing:0.18px;">Ativo</div></div>
<div class="chip b" style="left:995.6px;top:273.8px;width:192.5px"></div>
<svg style="left:1006.6px;top:275.4px" width="19" height="19" viewBox="0 0 19 19" fill="none" stroke="#2f6ee0" stroke-width="1.8" stroke-linecap="round" stroke-linejoin="round"><path d="M4.6 16.2A8.2 8.2 0 1 1 14.4 16.2"/><path d="M9.5 13.6V7.2M6.9 9.6L9.5 7L12.1 9.6"/></svg>
<div class="t" style="left:1031.3px;top:277.8px;font-size:16.8px;font-weight:700;color:#2f6ee0;letter-spacing:0.23px;">3 recomendações</div>
<div class="t" style="left:1262.4px;top:264.2px;font-size:19.2px;letter-spacing:0.09px;">Usando a estrat...</div>
<div class="t" style="left:1444.8px;top:264.2px;font-size:19.2px;letter-spacing:0.08px;">Usando o orçam...</div>
<div class="t" style="left:1627.0px;top:264.2px;font-size:19.2px;letter-spacing:-0.62px;">C...</div>
<div class="abs" style="left:1826.6px;top:274px;width:16px;height:2px;background:#2b3941"></div>
<div class="t" style="left:1681.3px;top:293.6px;font-size:16.8px;color:#626e76;letter-spacing:0.20px;">Múltiplas conversões</div>
<div class="cb" style="left:16.6px;top:332.2px"></div>
<div class="tg" style="left:104.6px;top:333.4px"><i></i></div>
<div class="t" style="left:206.3px;top:326.9px;font-size:18.8px;color:#2159c3;letter-spacing:-0.24px;">AD | RECONHECIMENTO | FOURMKT</div>
<div class="dot x" style="left:772.8px;top:328.1px"></div>
<div class="clip" style="left:794.0px;top:319.8px;width:173.2px;height:40px"><div class="t" style="left:6.3px;top:6.9px;font-size:19.2px;letter-spacing:0.15px;">Conjuntos de anúncios</div></div>
<div class="abs" style="left:991.2px;top:336px;width:14.8px;height:2px;background:#2b3941"></div>
<div class="t" style="left:1262.4px;top:326.7px;font-size:19.2px;letter-spacing:0.09px;">Usando a estrat...</div>
<div class="t" style="left:1444.8px;top:326.7px;font-size:19.2px;letter-spacing:0.08px;">Usando o orçam...</div>
<div class="t" style="left:1627.0px;top:326.7px;font-size:19.2px;letter-spacing:-0.62px;">C...</div>
<div class="abs" style="left:1826.6px;top:336px;width:16px;height:2px;background:#2b3941"></div>
<div class="t" style="left:1780.2px;top:356.2px;font-size:16.8px;color:#626e76;letter-spacing:0.22px;">Alcance</div>
<div class="cb" style="left:16.6px;top:394.8px"></div>
<div class="tg" style="left:104.6px;top:395.9px"><i></i></div>
<div class="t" style="left:206.3px;top:389.5px;font-size:18.8px;color:#2159c3;letter-spacing:-0.08px;">AD | SAZONAL POR CATEGORIA | CONVERSÃO - Interna</div>
<div class="dot x" style="left:772.8px;top:390.6px"></div>
<div class="clip" style="left:794.0px;top:382.4px;width:173.2px;height:40px"><div class="t" style="left:6.3px;top:6.9px;font-size:19.2px;letter-spacing:0.15px;">Conjuntos de anúncios</div></div>
<div class="abs" style="left:991.2px;top:399px;width:14.8px;height:2px;background:#2b3941"></div>
<div class="t" style="left:1262.4px;top:389.3px;font-size:19.2px;letter-spacing:0.09px;">Usando a estrat...</div>
<div class="t" style="left:1444.8px;top:389.3px;font-size:19.2px;letter-spacing:0.08px;">Usando o orçam...</div>
<div class="t" style="left:1627.0px;top:389.3px;font-size:19.2px;letter-spacing:-0.62px;">C...</div>
<div class="abs" style="left:1826.6px;top:399px;width:16px;height:2px;background:#2b3941"></div>
<div class="t" style="left:1681.3px;top:418.7px;font-size:16.8px;color:#626e76;letter-spacing:0.20px;">Múltiplas conversões</div>
<div class="cb" style="left:16.6px;top:457.3px"></div>
<div class="tg" style="left:104.6px;top:458.5px"><i></i></div>
<div class="t" style="left:206.3px;top:452.0px;font-size:18.8px;color:#2159c3;letter-spacing:-0.05px;">[AD] SAZONAL | ESQUENTA BLACK FRIDAY</div>
<div class="dot x" style="left:772.8px;top:453.2px"></div>
<div class="clip" style="left:794.0px;top:444.9px;width:173.2px;height:40px"><div class="t" style="left:6.3px;top:6.9px;font-size:19.2px;letter-spacing:0.15px;">Não está em veiculação</div></div>
<div class="chip r" style="left:995.6px;top:461.0px;width:175px;height:24.7px;border-radius:12.4px"></div>
<svg style="left:1003.4px;top:466.1px" width="17" height="15" viewBox="0 0 17 15"><path d="M7.1 1.3C7.7 0.2 9.3 0.2 9.9 1.3L16.3 12.5C16.9 13.6 16.1 14.8 14.9 14.8H2.1C0.9 14.8 0.1 13.6 0.7 12.5Z" fill="#6e1313"/><path d="M8.5 4.6V9.4" stroke="#fff" stroke-width="1.7" stroke-linecap="round"/><circle cx="8.5" cy="12.1" r="1.05" fill="#fff"/></svg>
<div class="t" style="left:1026.0px;top:467.3px;font-size:16.8px;font-weight:700;color:#6e1313;letter-spacing:-0.04px;">Erros de anúncio</div>
<div class="t" style="left:1262.4px;top:451.8px;font-size:19.2px;letter-spacing:0.09px;">Usando a estrat...</div>
<div class="t" style="left:1444.8px;top:451.8px;font-size:19.2px;letter-spacing:0.08px;">Usando o orçam...</div>
<div class="t" style="left:1627.0px;top:451.8px;font-size:19.2px;letter-spacing:-0.62px;">C...</div>
<div class="abs" style="left:1826.6px;top:461px;width:16px;height:2px;background:#2b3941"></div>
<div class="t" style="left:1738.0px;top:481.3px;font-size:16.8px;color:#626e76;letter-spacing:0.21px;">Clique no link</div>
<div class="cb" style="left:16.6px;top:519.9px"></div>
<div class="tg" style="left:104.6px;top:521.0px"><i></i></div>
<div class="t" style="left:206.3px;top:514.6px;font-size:18.8px;color:#2159c3;letter-spacing:0.50px;">Preços baixos roupeiro 5485</div>
<div class="dot x" style="left:772.8px;top:515.8px"></div>
<div class="clip" style="left:794.0px;top:507.5px;width:173.2px;height:40px"><div class="t" style="left:6.3px;top:6.9px;font-size:19.2px;letter-spacing:0.15px;">Não está em veiculação</div></div>
<div class="chip r" style="left:995.6px;top:523.5px;width:175px;height:24.7px;border-radius:12.4px"></div>
<svg style="left:1003.4px;top:528.6px" width="17" height="15" viewBox="0 0 17 15"><path d="M7.1 1.3C7.7 0.2 9.3 0.2 9.9 1.3L16.3 12.5C16.9 13.6 16.1 14.8 14.9 14.8H2.1C0.9 14.8 0.1 13.6 0.7 12.5Z" fill="#6e1313"/><path d="M8.5 4.6V9.4" stroke="#fff" stroke-width="1.7" stroke-linecap="round"/><circle cx="8.5" cy="12.1" r="1.05" fill="#fff"/></svg>
<div class="t" style="left:1026.0px;top:529.8px;font-size:16.8px;font-weight:700;color:#6e1313;letter-spacing:-0.04px;">Erros de anúncio</div>
<div class="t" style="left:1262.4px;top:514.4px;font-size:19.2px;letter-spacing:0.09px;">Usando a estrat...</div>
<div class="t" style="left:1444.8px;top:514.4px;font-size:19.2px;letter-spacing:0.08px;">Usando o orçam...</div>
<div class="t" style="left:1627.0px;top:514.4px;font-size:19.2px;letter-spacing:-0.62px;">C...</div>
<div class="abs" style="left:1826.6px;top:524px;width:16px;height:2px;background:#2b3941"></div>
<div class="t" style="left:1681.3px;top:543.8px;font-size:16.8px;color:#626e76;letter-spacing:-0.05px;">Visualização da pá...</div>
<div class="cb" style="left:16.6px;top:582.4px"></div>
<div class="tg" style="left:104.6px;top:583.6px"><i></i></div>
<div class="t" style="left:206.3px;top:577.1px;font-size:18.8px;color:#2159c3;letter-spacing:0.54px;">#levaapa cozinha 5689</div>
<div class="dot x" style="left:772.8px;top:578.3px"></div>
<div class="clip" style="left:794.0px;top:570.0px;width:173.2px;height:40px"><div class="t" style="left:6.3px;top:6.9px;font-size:19.2px;letter-spacing:0.15px;">Não está em veiculação</div></div>
<div class="chip r" style="left:995.6px;top:586.1px;width:175px;height:24.7px;border-radius:12.4px"></div>
<svg style="left:1003.4px;top:591.2px" width="17" height="15" viewBox="0 0 17 15"><path d="M7.1 1.3C7.7 0.2 9.3 0.2 9.9 1.3L16.3 12.5C16.9 13.6 16.1 14.8 14.9 14.8H2.1C0.9 14.8 0.1 13.6 0.7 12.5Z" fill="#6e1313"/><path d="M8.5 4.6V9.4" stroke="#fff" stroke-width="1.7" stroke-linecap="round"/><circle cx="8.5" cy="12.1" r="1.05" fill="#fff"/></svg>
<div class="t" style="left:1026.0px;top:592.4px;font-size:16.8px;font-weight:700;color:#6e1313;letter-spacing:-0.04px;">Erros de anúncio</div>
<div class="t" style="left:1262.4px;top:576.9px;font-size:19.2px;letter-spacing:0.09px;">Usando a estrat...</div>
<div class="t" style="left:1444.8px;top:576.9px;font-size:19.2px;letter-spacing:0.08px;">Usando o orçam...</div>
<div class="t" style="left:1627.0px;top:576.9px;font-size:19.2px;letter-spacing:-0.62px;">C...</div>
<div class="abs" style="left:1826.6px;top:586px;width:16px;height:2px;background:#2b3941"></div>
<div class="t" style="left:1681.3px;top:606.4px;font-size:16.8px;color:#626e76;">Visualizações da p...</div>
<div class="hline" style="left:0;top:0.2px;width:1842px;height:1.2px;background:#e1e3e5"></div>
<div class="hline" style="left:0;top:65.2px;width:1842px;height:1.6px;background:#dddfe1"></div>
<div class="abs" style="left:0;top:607.6px;width:1842px;height:103px;background:#fff;box-shadow:0 -2px 5px rgba(0,0,0,.15),0 -1px 1px rgba(0,0,0,.05)"></div>
<div class="hline" style="left:0;top:709.8px;width:1842px;height:1.1px;background:#e1e3e5"></div>
<div class="vline" style="left:66px;top:1.0px;height:708.5px"></div>
<div class="vline" style="left:193px;top:1.0px;height:708.5px"></div>
<div class="vline" style="left:762px;top:1.0px;height:708.5px"></div>
<div class="vline" style="left:978px;top:1.0px;height:708.5px"></div>
<div class="vline" style="left:1250px;top:1.0px;height:708.5px"></div>
<div class="vline" style="left:1432px;top:1.0px;height:708.5px"></div>
<div class="vline" style="left:1615px;top:1.0px;height:708.5px"></div>
<div class="vline" style="left:1669px;top:1.0px;height:708.5px"></div>
<div class="cb" style="left:16.6px;top:17.6px"></div>
<div class="t hb" style="left:81.3px;top:24.5px;font-size:18.6px;font-weight:700;letter-spacing:0.59px;">Desati...</div>
<div class="t hb" style="left:208.3px;top:24.5px;font-size:18.6px;font-weight:700;letter-spacing:0.15px;">campanha</div>
<svg style="left:738.5px;top:31.5px" width="10.2" height="6.2" viewBox="0 0 12 7" preserveAspectRatio="none"><path d="M1.3 0.3H10.7C11.7 0.3 12 1 11.3 1.7L6.8 6.3C6.3 6.8 5.7 6.8 5.2 6.3L0.7 1.7C0 1 0.3 0.3 1.3 0.3Z" fill="#1c2b33"/></svg>
<div class="t hb" style="left:775.6px;top:23.7px;font-size:18.6px;font-weight:700;letter-spacing:0.04px;">Veiculação</div>
<svg style="left:882.0px;top:25.5px" width="15" height="16" viewBox="0 0 15 16" fill="none" stroke="#2f6ee0" stroke-width="1.6" stroke-linecap="round" stroke-linejoin="round"><path d="M7.4 14.6V1.6M2 7L7.4 1.4L12.8 7"/></svg>
<svg style="left:956.6px;top:31.5px" width="10.2" height="6.2" viewBox="0 0 12 7" preserveAspectRatio="none"><path d="M1.3 0.3H10.7C11.7 0.3 12 1 11.3 1.7L6.8 6.3C6.3 6.8 5.7 6.8 5.2 6.3L0.7 1.7C0 1 0.3 0.3 1.3 0.3Z" fill="#1c2b33"/></svg>
<div class="t hb" style="left:993.6px;top:25.2px;font-size:18.6px;font-weight:700;letter-spacing:-0.20px;">Ações</div>
<svg style="left:1228.6px;top:31.5px" width="10.2" height="6.2" viewBox="0 0 12 7" preserveAspectRatio="none"><path d="M1.3 0.3H10.7C11.7 0.3 12 1 11.3 1.7L6.8 6.3C6.3 6.8 5.7 6.8 5.2 6.3L0.7 1.7C0 1 0.3 0.3 1.3 0.3Z" fill="#1c2b33"/></svg>
<div class="t hb" style="left:1265.3px;top:13.5px;font-size:18.6px;font-weight:700;letter-spacing:0.27px;">Estratégia de</div>
<div class="t hb" style="left:1265.3px;top:38.5px;font-size:18.6px;font-weight:700;letter-spacing:-0.01px;">lance</div>
<svg style="left:1411.0px;top:31.8px" width="10.2" height="6.2" viewBox="0 0 12 7" preserveAspectRatio="none"><path d="M1.3 0.3H10.7C11.7 0.3 12 1 11.3 1.7L6.8 6.3C6.3 6.8 5.7 6.8 5.2 6.3L0.7 1.7C0 1 0.3 0.3 1.3 0.3Z" fill="#1c2b33"/></svg>
<div class="t hb" style="left:1447.4px;top:24.9px;font-size:18.6px;font-weight:700;letter-spacing:0.48px;">Orçamento</div>
<svg style="left:1593.0px;top:31.8px" width="10.2" height="6.2" viewBox="0 0 12 7" preserveAspectRatio="none"><path d="M1.3 0.3H10.7C11.7 0.3 12 1 11.3 1.7L6.8 6.3C6.3 6.8 5.7 6.8 5.2 6.3L0.7 1.7C0 1 0.3 0.3 1.3 0.3Z" fill="#1c2b33"/></svg>
<div class="t hb" style="left:1629.6px;top:13.5px;font-size:18.6px;font-weight:700;letter-spacing:0.35px;">C...</div>
<div class="t hb" style="left:1629.6px;top:38.5px;font-size:18.6px;font-weight:700;letter-spacing:0.71px;">d...</div>
<svg style="left:1647.6px;top:31.8px" width="10.2" height="6.2" viewBox="0 0 12 7" preserveAspectRatio="none"><path d="M1.3 0.3H10.7C11.7 0.3 12 1 11.3 1.7L6.8 6.3C6.3 6.8 5.7 6.8 5.2 6.3L0.7 1.7C0 1 0.3 0.3 1.3 0.3Z" fill="#1c2b33"/></svg>
<div class="t hb" style="left:1695.3px;top:24.5px;font-size:18.6px;font-weight:700;letter-spacing:0.09px;">Resultados</div>
<svg style="left:1830.5px;top:31.8px" width="10.2" height="6.2" viewBox="0 0 12 7" preserveAspectRatio="none"><path d="M1.3 0.3H10.7C11.7 0.3 12 1 11.3 1.7L6.8 6.3C6.3 6.8 5.7 6.8 5.2 6.3L0.7 1.7C0 1 0.3 0.3 1.3 0.3Z" fill="#1c2b33"/></svg>
<div class="t" style="left:211.4px;top:621.7px;font-size:19.2px;letter-spacing:0.19px;">Resultados de 924 campanhas</div>
<svg style="left:486.8px;top:622.8px" width="17" height="17" viewBox="0 0 17 17"><circle cx="8.5" cy="8.5" r="8.2" fill="#1c2b33"/><circle cx="8.5" cy="4.6" r="1.25" fill="#fff"/><path d="M6.7 7.4H9.4V12.6M6.6 12.8H11" stroke="#fff" stroke-width="1.5" fill="none" stroke-linecap="round" stroke-linejoin="round"/></svg>
<div class="t" style="left:211.4px;top:650.5px;font-size:16.6px;color:#626e76;letter-spacing:0.25px;">Não inclui itens excluídos</div>
</div>
<div class="abs" style="left:78px;top:1061.6px;width:1215px;height:9.4px;border-radius:5px;background:#c4c4c4"></div>
</div>

</div>
</body>
</html>
